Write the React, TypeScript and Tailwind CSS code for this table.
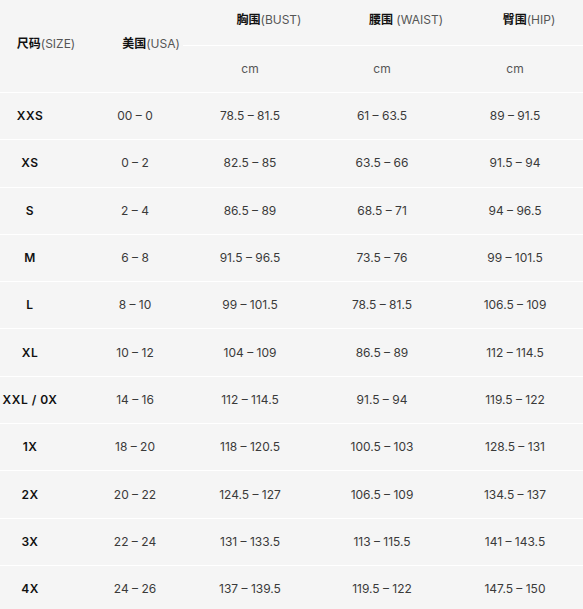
const rows = [
  ["XXS", "00 – 0", "78.5 – 81.5", "61 – 63.5", "89 – 91.5"],
  ["XS", "0 – 2", "82.5 – 85", "63.5 – 66", "91.5 – 94"],
  ["S", "2 – 4", "86.5 – 89", "68.5 – 71", "94 – 96.5"],
  ["M", "6 – 8", "91.5 – 96.5", "73.5 – 76", "99 – 101.5"],
  ["L", "8 – 10", "99 – 101.5", "78.5 – 81.5", "106.5 – 109"],
  ["XL", "10 – 12", "104 – 109", "86.5 – 89", "112 – 114.5"],
  ["XXL / 0X", "14 – 16", "112 – 114.5", "91.5 – 94", "119.5 – 122"],
  ["1X", "18 – 20", "118 – 120.5", "100.5 – 103", "128.5 – 131"],
  ["2X", "20 – 22", "124.5 – 127", "106.5 – 109", "134.5 – 137"],
  ["3X", "22 – 24", "131 – 133.5", "113 – 115.5", "141 – 143.5"],
  ["4X", "24 – 26", "137 – 139.5", "119.5 – 122", "147.5 – 150"],
];

const cols = "grid grid-cols-[87px_96px_134px_130px_136px]";

function Head({ cn, en }: { cn: string; en: string }) {
  return (
    <span className="whitespace-nowrap">
      <span className="font-bold text-[#111]">{cn}</span>
      <span className="text-[#555]">{en}</span>
    </span>
  );
}

export default function App() {
  return (
    <div
      className="w-[583px] h-[609px] overflow-hidden bg-[#f5f5f5] text-[12px]"
      style={{ fontFamily: 'Inter, "Noto Sans CJK SC", sans-serif' }}
    >
      {/* header */}
      <div className={`${cols} grid-rows-[45px_47px]`}>
        <div className="row-span-2 flex items-center justify-center pl-[5px] pb-[5px]">
          <Head cn="尺码" en="(SIZE)" />
        </div>
        <div className="row-span-2 flex items-center justify-center pl-[32px] pb-[5px]">
          <Head cn="美国" en="(USA)" />
        </div>
        <div className="flex items-center justify-center pl-[38px] pb-[5px]">
          <Head cn="胸围" en="(BUST)" />
        </div>
        <div className="flex items-center justify-center pl-[48px] pb-[5px]">
          <Head cn="腰围" en=" (WAIST)" />
        </div>
        <div className="flex items-center justify-center pl-[28px] pb-[5px]">
          <Head cn="臀围" en="(HIP)" />
        </div>
        <div className="col-start-3 border-t-[1.5px] border-white flex items-center justify-center text-[#555]">cm</div>
        <div className="border-t-[1.5px] border-white flex items-center justify-center text-[#555]">cm</div>
        <div className="border-t-[1.5px] border-white flex items-center justify-center text-[#555]">cm</div>
      </div>

      {/* body */}
      {rows.map((r) => (
        <div key={r[0]} className={`${cols} h-[47.3px] border-t-[1.5px] border-white items-center`}>
          <div className="pr-[27px] text-center font-semibold text-[#111] tracking-[0.5px] whitespace-nowrap">{r[0]}</div>
          {r.slice(1).map((v, i) => (
            <div key={i} className="text-center text-[#3a3a3a] whitespace-nowrap">
              {v.replace(" – ", "  –  ")}
            </div>
          ))}
        </div>
      ))}
    </div>
  );
}
